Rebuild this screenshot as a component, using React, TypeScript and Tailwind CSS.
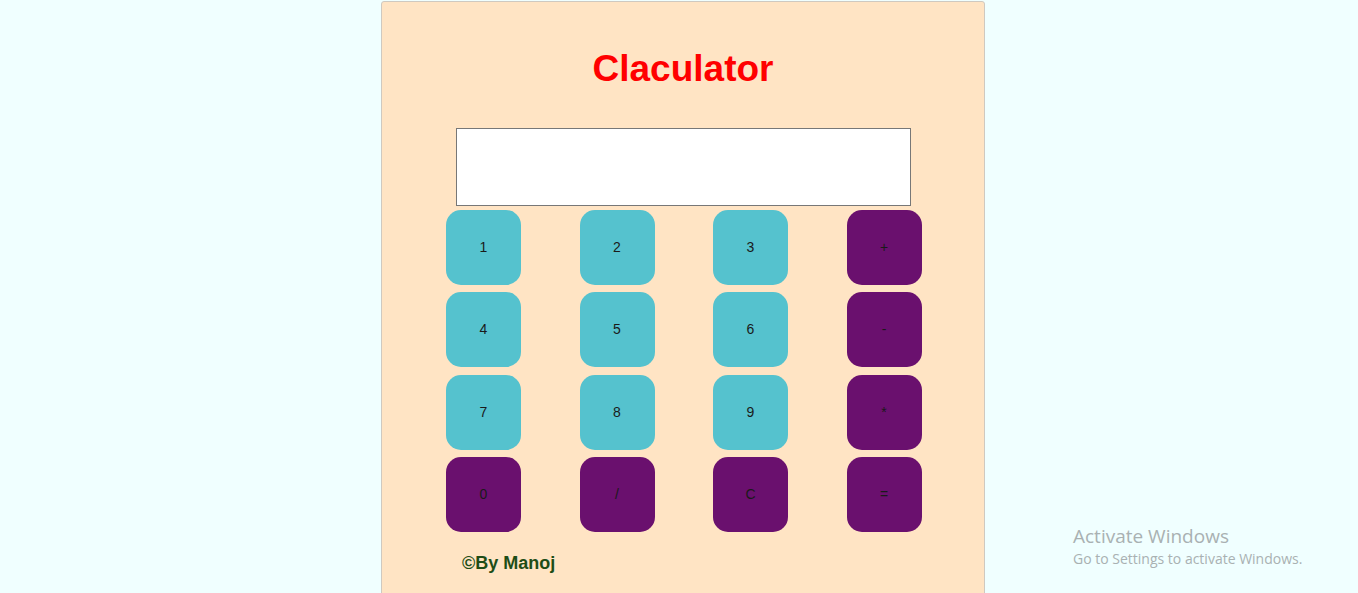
import React from "react";

const keys = [
  { label: "1", op: false },
  { label: "2", op: false },
  { label: "3", op: false },
  { label: "+", op: true },
  { label: "4", op: false },
  { label: "5", op: false },
  { label: "6", op: false },
  { label: "-", op: true },
  { label: "7", op: false },
  { label: "8", op: false },
  { label: "9", op: false },
  { label: "*", op: true },
  { label: "0", op: true },
  { label: "/", op: true },
  { label: "C", op: true },
  { label: "=", op: true },
];

export default function App() {
  return (
    <div className="relative h-[593px] overflow-hidden bg-[#f0ffff] font-['Liberation_Sans',Arial,sans-serif]">
      <div className="ml-[381px] mt-px h-[640px] w-[604px] rounded-[3px] border border-[#cfc9c0] bg-[#ffe4c4]">
        <h1 className="pt-[45px] text-center text-[37px] font-bold leading-[44px] text-[#ff0000]">Claculator</h1>

        <div className="mt-[37px] flex justify-center">
          <input
            type="text"
            className="ml-[1px] h-[78px] w-[455px] border border-[#777] bg-white outline-none"
          />
        </div>

        <div className="ml-[64px] mt-[4px] grid w-max grid-cols-[repeat(4,75px)] gap-x-[58.5px] gap-y-[7.33px]">
          {keys.map((k) => (
            <button
              key={k.label}
              className={`flex h-[75px] w-[75px] items-center justify-center rounded-[15px] text-[14px] text-[#1a1a1a] ${
                k.op ? "bg-[#6a106e]" : "bg-[#55c2ce]"
              }`}
            >
              {k.label}
            </button>
          ))}
        </div>

        <p className="ml-[80px] mt-[18px] text-[18px] font-bold text-[#1e4d16]">©By Manoj</p>
      </div>

      <div className="absolute left-[1073px] top-[524px] font-['Open_Sans',sans-serif] text-[#a9b1b2]">
        <div className="text-[19px] leading-[24px]">Activate Windows</div>
        <div className="text-[14px] leading-[22px]">Go to Settings to activate Windows.</div>
      </div>
    </div>
  );
}
